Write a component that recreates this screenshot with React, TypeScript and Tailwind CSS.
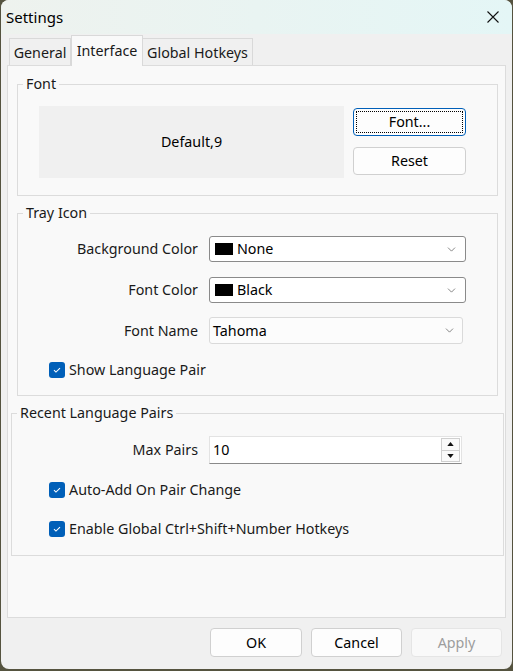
import { ChevronDown } from "lucide-react";

const FONT = "font-['Segoe_UI','Noto_Sans',sans-serif]";

function GroupBox({
  title,
  className,
  children,
}: {
  title: string;
  className: string;
  children: React.ReactNode;
}) {
  return (
    <div className={`relative border border-[#dcdcdc] ${className}`}>
      <span className="absolute -top-[11px] left-[5px] bg-[#f9f9f9] px-[3px] text-[14.3px] leading-[20px] text-[#1a1a1a]">
        {title}
      </span>
      {children}
    </div>
  );
}

function Check({ label, className = "" }: { label: string; className?: string }) {
  return (
    <div className={`flex items-center gap-[4px] pl-[31px] ${className}`}>
      <span className="flex size-[16px] items-center justify-center rounded-[3px] bg-[#005fb8]">
        <svg viewBox="0 0 16 16" className="size-[12px]" fill="none" stroke="#fff" strokeWidth="1.4">
          <path d="M4 8.2l2.6 2.6L12 5.4" />
        </svg>
      </span>
      <span className="text-[14.3px] leading-[20px] text-[#1a1a1a]">{label}</span>
    </div>
  );
}

function Row({ label, children, className = "" }: { label: string; children: React.ReactNode; className?: string }) {
  return (
    <div className={`flex items-center ${className}`}>
      <span className="w-[181px] pr-[1px] text-right text-[14.3px] leading-[20px] text-[#1a1a1a]">{label}</span>
      <div className="ml-[10px]">{children}</div>
    </div>
  );
}

function ColorCombo({ value }: { value: string }) {
  return (
    <div className="flex h-[26px] w-[257px] items-center rounded-[3px] border border-[#8a8a8a] bg-white pl-[5px] pr-[7px]">
      <span className="h-[12px] w-[18px] bg-black" />
      <span className="ml-[4px] flex-1 text-[14.3px] leading-[20px] text-black">{value}</span>
      <ChevronDown className="size-[13px] text-[#555]" strokeWidth={1.3} />
    </div>
  );
}

function Button({
  label,
  className = "",
  focused = false,
  disabled = false,
}: {
  label: string;
  className?: string;
  focused?: boolean;
  disabled?: boolean;
}) {
  return (
    <div
      className={`flex items-center justify-center rounded-[4px] border text-[14.3px] leading-[20px] ${
        focused ? "border-[#005fb8] bg-[#fdfdfd] p-[2px]" : disabled ? "border-[#e5e5e5] bg-[#f9f9f9]" : "border-[#d0d0d0] bg-[#fdfdfd]"
      } ${disabled ? "text-[#9d9d9d]" : "text-black"} ${className}`}
    >
      {focused ? (
        <div className="flex h-full w-full items-center justify-center border border-dotted border-black">{label}</div>
      ) : (
        label
      )}
    </div>
  );
}

export default function App() {
  return (
    <div className={`h-[671px] w-[513px] bg-[#55533f] ${FONT}`}>
      <div className="ml-px flex h-[669px] w-[511px] flex-col overflow-hidden rounded-[8px] bg-[#f0f0f0]">
        {/* title bar */}
        <div className="flex h-[34px] items-center justify-between bg-linear-to-r from-[#eef2ee] to-[#e4f6f6] pl-[5px] pr-[13px]">
          <span className="text-[15px] leading-[20px] text-black">Settings</span>
          <svg viewBox="0 0 12 12" className="size-[12px]" stroke="#111" strokeWidth="1.1">
            <path d="M0.5 0.5l11 11M11.5 0.5l-11 11" />
          </svg>
        </div>

        {/* tabs */}
        <div className="flex h-[31px] items-end pl-[8px]">
          <div className="flex h-[27px] w-[62px] items-center justify-center border border-b-0 border-[#d9d9d9] bg-[#f0f0f0] pt-[2px] text-[14.3px] text-[#1a1a1a]">
            General
          </div>
          <div className="relative z-10 -mb-px flex h-[31px] w-[72px] items-center justify-center border border-b-0 border-[#d9d9d9] bg-[#f9f9f9] pb-[1px] text-[14.3px] text-[#1a1a1a]">
            Interface
          </div>
          <div className="flex h-[27px] w-[110px] items-center justify-center border border-b-0 border-l-0 border-[#d9d9d9] bg-[#f0f0f0] pt-[2px] text-[14.3px] text-[#1a1a1a]">
            Global Hotkeys
          </div>
        </div>

        {/* tab page */}
        <div className="ml-[6px] flex h-[553px] w-[499px] flex-col border border-[#dcdcdc] bg-[#f9f9f9]">
          <GroupBox title="Font" className="ml-[9px] mt-[18px] h-[112px] w-[481px]">
            <div className="flex pl-[21px] pt-[21px]">
              <div className="flex h-[72px] w-[305px] items-center justify-center bg-[#f0f0f0] text-[14.3px] text-black">
                Default,9
              </div>
              <div className="ml-[9px] flex flex-col">
                <Button label="Font..." focused className="mt-[2px] h-[28px] w-[113px]" />
                <Button label="Reset" className="mt-[11px] h-[28px] w-[113px]" />
              </div>
            </div>
          </GroupBox>

          <GroupBox title="Tray Icon" className="ml-[9px] mt-[17px] h-[183px] w-[481px]">
            <Row label="Background Color" className="mt-[22px]">
              <ColorCombo value="None" />
            </Row>
            <Row label="Font Color" className="mt-[15px]">
              <ColorCombo value="Black" />
            </Row>
            <Row label="Font Name" className="mt-[14px]">
              <div className="flex h-[27px] w-[254px] items-center rounded-[3px] border border-[#dadada] bg-[#fcfcfc] pl-[3px] pr-[6px]">
                <span className="flex-1 text-[14.3px] leading-[20px] text-black">Tahoma</span>
                <ChevronDown className="size-[13px] text-[#555]" strokeWidth={1.3} />
              </div>
            </Row>
            <Check label="Show Language Pair" className="mt-[16px]" />
          </GroupBox>

          <GroupBox title="Recent Language Pairs" className="ml-[3px] mt-[17px] h-[143px] w-[493px]">
            <Row label="Max Pairs" className="mt-[22px] pl-[6px]">
              <div className="flex h-[28px] w-[253px] items-center border border-[#e3e3e3] border-b-[#8a8a8a] bg-white pl-[3px] pr-[1px]">
                <span className="flex-1 text-[14.3px] leading-[20px] text-black">10</span>
                <div className="flex h-[24px] w-[19px] flex-col">
                  <div className="flex flex-1 items-center justify-center border border-[#d0d0d0] bg-[#fafafa]">
                    <svg viewBox="0 0 8 5" className="h-[4px] w-[7px]"><path d="M4 0L8 5H0z" fill="#111" /></svg>
                  </div>
                  <div className="flex flex-1 items-center justify-center border border-t-0 border-[#d0d0d0] bg-[#fafafa]">
                    <svg viewBox="0 0 8 5" className="h-[4px] w-[7px]"><path d="M0 0h8L4 5z" fill="#111" /></svg>
                  </div>
                </div>
              </div>
            </Row>
            <Check label="Auto-Add On Pair Change" className="mt-[16px] pl-[37px]" />
            <Check label="Enable Global Ctrl+Shift+Number Hotkeys" className="mt-[19px] pl-[37px]" />
          </GroupBox>
        </div>

        {/* dialog buttons */}
        <div className="mt-[10px] flex justify-end gap-[9px] pr-[10px]">
          <Button label="OK" className="h-[29px] w-[92px]" />
          <Button label="Cancel" className="h-[29px] w-[91px]" />
          <Button label="Apply" disabled className="h-[29px] w-[91px]" />
        </div>
      </div>
    </div>
  );
}
